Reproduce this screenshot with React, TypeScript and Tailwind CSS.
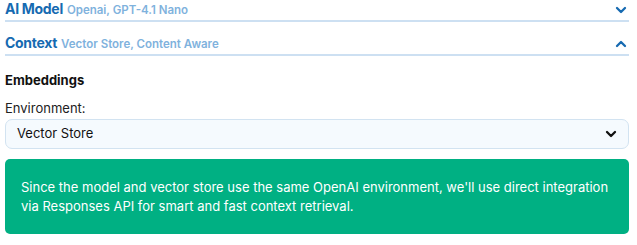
import React from "react";

const Chevron = ({ up, className }: { up?: boolean; className?: string }) => (
  <svg width="12" height="12" viewBox="0 0 12 12" className={className} fill="none">
    <path
      d={up ? "M2 8 L6 4 L10 8" : "M2 4 L6 8 L10 4"}
      stroke="currentColor"
      strokeWidth="2.3"
      strokeLinecap="round"
      strokeLinejoin="round"
    />
  </svg>
);

const Header = ({ title, sub, up }: { title: string; sub: string; up?: boolean }) => (
  <div className="flex items-center justify-between border-b-2 border-[#cde0f2] pb-[1px] pr-[2px]">
    <div className="flex items-baseline gap-[4px]">
      <span className="text-[14px] font-bold text-[#166ab1] leading-[18px] tracking-[-0.3px]">{title}</span>
      <span className="text-[11.5px] font-semibold text-[#7fb2dd] leading-[18px]">{sub}</span>
    </div>
    <Chevron up={up} className="text-[#166ab1]" />
  </div>
);

export default function App() {
  return (
    <div
      className="w-[637px] h-[245px] bg-white overflow-hidden pl-[5px] pr-[8px]"
      style={{ fontFamily: "Inter, 'Noto Sans', sans-serif" }}
    >
      <Header title="AI Model" sub="Openai, GPT-4.1 Nano" />
      <div className="mt-[12px]">
        <Header title="Context" sub="Vector Store, Content Aware" up />
      </div>
      <div className="mt-[16px] text-[13px] font-bold text-[#111] leading-[16px]">Embeddings</div>
      <div className="mt-[12px] text-[13px] text-[#222] leading-[16px]">Environment:</div>
      <div className="mt-[3px] h-[30px] rounded-[7px] border border-[#d2e3f1] bg-[#f5fafe] flex items-center justify-between pl-[11px] pr-[11px]">
        <span className="text-[13px] text-[#111]">Vector Store</span>
        <Chevron className="text-[#111]" />
      </div>
      <div className="mt-[10px] rounded-[5px] bg-[#00b083] px-[16px] pt-[19px] pb-[18px] text-[13px] leading-[19px] text-white">
        Since the model and vector store use the same OpenAI environment, we'll use direct integration via
        Responses API for smart and fast context retrieval.
      </div>
    </div>
  );
}
